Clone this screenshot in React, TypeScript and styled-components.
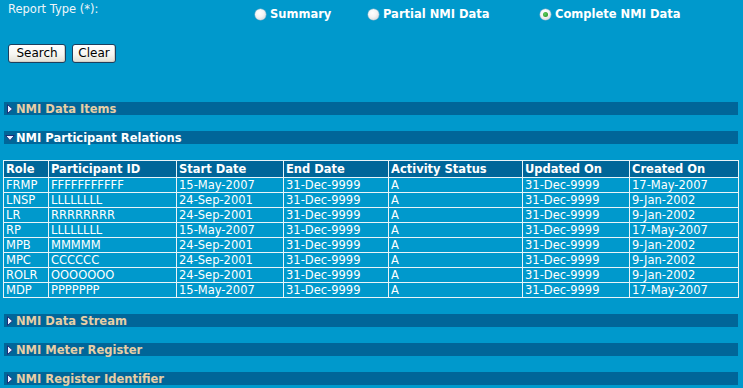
import React from "react";
import styled, { createGlobalStyle } from "styled-components";

const Global = createGlobalStyle`
  html, body { margin: 0; padding: 0; background: #0099cc; }
  body { font-family: "DejaVu Sans", Verdana, sans-serif; font-size: 11.5px; color: #ffffff; }
`;

const Page = styled.div`
  padding: 0 5px 0 3px;
  width: 735px;
  height: 388px;
  overflow: hidden;
`;

const TopRow = styled.div`
  display: flex;
  height: 41px;
  padding-top: 3px;
`;

const FieldLabel = styled.div`
  width: 252px;
  padding-left: 5px;
  box-sizing: border-box;
  line-height: 13px;
  color: #eef6fa;
`;

const RadioOption = styled.label<{ $w: number }>`
  display: flex;
  align-items: center;
  gap: 4px;
  width: ${(p) => p.$w}px;
  height: 13px;
  margin-top: 5px;
  font-weight: bold;
  line-height: 13px;
  color: #ffffff;
`;

const RadioDot = styled.span<{ $on?: boolean }>`
  position: relative;
  width: 11px;
  height: 11px;
  border-radius: 50%;
  box-sizing: border-box;
  background: radial-gradient(circle at 40% 35%, #ffffff 0%, #f4f4f4 45%, #c8ccd0 100%);
  box-shadow: 0 0 0 0.5px #8fb3c8;
  &::after {
    content: "";
    display: ${(p) => (p.$on ? "block" : "none")};
    position: absolute;
    left: 3px;
    top: 3px;
    width: 5px;
    height: 5px;
    border-radius: 50%;
    background: radial-gradient(circle at 40% 40%, #5fd05f, #1d8a1d);
  }
`;

const ButtonRow = styled.div`
  display: flex;
  gap: 6px;
  padding-left: 5px;
  height: 19px;
`;

const Button = styled.button<{ $w: number }>`
  width: ${(p) => p.$w}px;
  height: 19px;
  padding: 0;
  font-family: "DejaVu Sans", Verdana, sans-serif;
  font-size: 12px;
  line-height: 15px;
  color: #000;
  border: 1px solid #1c3f5e;
  border-radius: 3px;
  background: linear-gradient(#ffffff 0%, #f6f6f2 55%, #e2e0d6 100%);
  box-shadow: inset -1px -1px 0 #d4d0c4;
`;

const Section = styled.div<{ $gap: number }>`
  margin-top: ${(p) => p.$gap}px;
`;

const Bar = styled.div<{ $open?: boolean }>`
  display: flex;
  align-items: center;
  box-sizing: border-box;
  height: 13px;
  padding-top: 1px;
  margin: 0 0 0 1px;
  background: #006699;
  font-weight: bold;
  line-height: 12px;
  color: ${(p) => (p.$open ? "#ffffff" : "#e6cfa6")};
`;

const Toggle = styled.span`
  display: inline-flex;
  width: 11px;
  justify-content: center;
  margin-right: 1px;
`;

const DataTable = styled.table`
  margin-top: 16px;
  width: 735px;
  border-collapse: collapse;
  table-layout: fixed;
  border: 1px solid #eaf4f8;
`;

const HeadCell = styled.th`
  height: 15px;
  padding: 1px 0 0 2px;
  background: #006699;
  border: 1px solid #eaf4f8;
  font-weight: bold;
  text-align: left;
  line-height: 13px;
  color: #ffffff;
  white-space: nowrap;
  overflow: hidden;
`;

const Cell = styled.td`
  height: 14px;
  padding: 0 0 0 2px;
  border: 1px solid #eaf4f8;
  line-height: 13px;
  color: #ffffff;
  white-space: nowrap;
  overflow: hidden;
`;

const RightArrow = () => (
  <svg width="6" height="10" viewBox="0 0 6 10">
    <path d="M0.5 0.5 L5.5 5 L0.5 9.5 Z" fill="#eef0ff" stroke="#1a2f7a" strokeWidth="1" />
  </svg>
);

const DownArrow = () => (
  <svg width="10" height="6" viewBox="0 0 10 6">
    <path d="M0.5 0.5 L9.5 0.5 L5 5.5 Z" fill="#eef0ff" stroke="#1a2f7a" strokeWidth="1" />
  </svg>
);

const SectionBar = ({ title, open }: { title: string; open?: boolean }) => (
  <Bar $open={open}>
    <Toggle>{open ? <DownArrow /> : <RightArrow />}</Toggle>
    {title}
  </Bar>
);

const cols = [45, 128, 107, 105, 134, 107, 109];
const heads = ["Role", "Participant ID", "Start Date", "End Date", "Activity Status", "Updated On", "Created On"];
const rows = [
  ["FRMP", "FFFFFFFFFFF", "15-May-2007", "31-Dec-9999", "A", "31-Dec-9999", "17-May-2007"],
  ["LNSP", "LLLLLLLL", "24-Sep-2001", "31-Dec-9999", "A", "31-Dec-9999", "9-Jan-2002"],
  ["LR", "RRRRRRRR", "24-Sep-2001", "31-Dec-9999", "A", "31-Dec-9999", "9-Jan-2002"],
  ["RP", "LLLLLLLL", "15-May-2007", "31-Dec-9999", "A", "31-Dec-9999", "17-May-2007"],
  ["MPB", "MMMMM", "24-Sep-2001", "31-Dec-9999", "A", "31-Dec-9999", "9-Jan-2002"],
  ["MPC", "CCCCCC", "24-Sep-2001", "31-Dec-9999", "A", "31-Dec-9999", "9-Jan-2002"],
  ["ROLR", "OOOOOOO", "24-Sep-2001", "31-Dec-9999", "A", "31-Dec-9999", "9-Jan-2002"],
  ["MDP", "PPPPPPP", "15-May-2007", "31-Dec-9999", "A", "31-Dec-9999", "17-May-2007"],
];

export default function App() {
  return (
    <Page>
      <Global />
      <TopRow>
        <FieldLabel>Report Type (*):</FieldLabel>
        <RadioOption $w={113}>
          <RadioDot />
          Summary
        </RadioOption>
        <RadioOption $w={172}>
          <RadioDot />
          Partial NMI Data
        </RadioOption>
        <RadioOption $w={180}>
          <RadioDot $on />
          Complete NMI Data
        </RadioOption>
      </TopRow>
      <ButtonRow>
        <Button $w={58}>Search</Button>
        <Button $w={44}>Clear</Button>
      </ButtonRow>
      <Section $gap={39}>
        <SectionBar title="NMI Data Items" />
      </Section>
      <Section $gap={16}>
        <SectionBar title="NMI Participant Relations" open />
        <DataTable>
          <colgroup>
            {cols.map((w, i) => (
              <col key={i} style={{ width: w }} />
            ))}
          </colgroup>
          <thead>
            <tr>
              {heads.map((h) => (
                <HeadCell key={h}>{h}</HeadCell>
              ))}
            </tr>
          </thead>
          <tbody>
            {rows.map((r, i) => (
              <tr key={i}>
                {r.map((c, j) => (
                  <Cell key={j}>{c}</Cell>
                ))}
              </tr>
            ))}
          </tbody>
        </DataTable>
      </Section>
      <Section $gap={16}>
        <SectionBar title="NMI Data Stream" />
      </Section>
      <Section $gap={16}>
        <SectionBar title="NMI Meter Register" />
      </Section>
      <Section $gap={16}>
        <SectionBar title="NMI Register Identifier" />
      </Section>
    </Page>
  );
}
